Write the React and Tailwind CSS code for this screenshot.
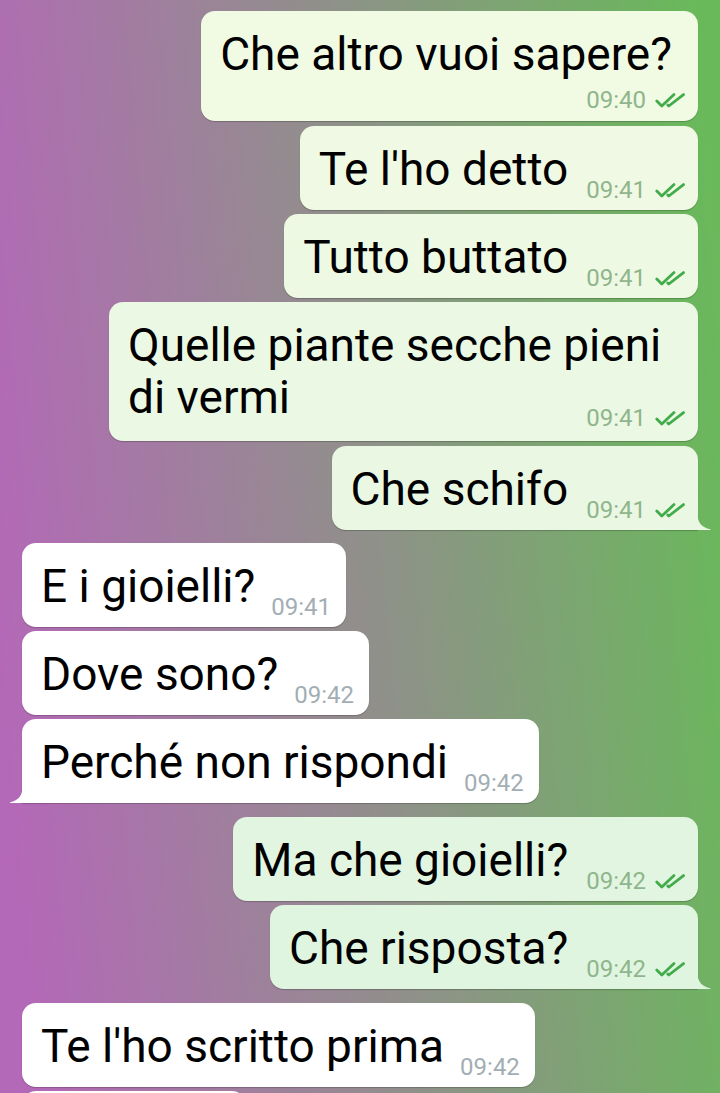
import React from "react";

const messages = [
  { out: true, text: "Che altro vuoi sapere?", time: "09:40", layout: "stack", bg: "bg-[#f1fae3]" },
  { out: true, text: "Te l'ho detto", time: "09:41", gap: "mt-[5px]", bg: "bg-[#f0f9e3]" },
  { out: true, text: "Tutto buttato", time: "09:41", bg: "bg-[#eef9e3]" },
  { out: true, text: "Quelle piante secche pieni di vermi", time: "09:41", layout: "wrap", bg: "bg-[#ebf8e3]" },
  { out: true, text: "Che schifo", time: "09:41", gap: "mt-[5px]", tail: true, bg: "bg-[#e9f7e3]" },
  { out: false, text: "E i gioielli?", time: "09:41", gap: "mt-[13px]" },
  { out: false, text: "Dove sono?", time: "09:42" },
  { out: false, text: "Perché non rispondi", time: "09:42", tail: true },
  { out: true, text: "Ma che gioielli?", time: "09:42", gap: "mt-[14px]", bg: "bg-[#e2f5e1]" },
  { out: true, text: "Che risposta?", time: "09:42", tail: true, bg: "bg-[#e0f5e0]" },
  { out: false, text: "Te l'ho scritto prima", time: "09:42", gap: "mt-[14px]" },
];

const Ticks = () => (
  <svg width="31" height="15" viewBox="0 0 31 15" fill="none" className="ml-[9px] mb-[3px] shrink-0">
    <path d="M1.8 8 L6.8 13 L19 1.6" stroke="#42ab4a" strokeWidth="2.8" strokeLinecap="round" strokeLinejoin="round" />
    <path d="M12.8 12 L13.8 13 L28.5 1.6" stroke="#42ab4a" strokeWidth="2.8" strokeLinecap="round" strokeLinejoin="round" />
  </svg>
);

const Meta = ({ out, time, className = "" }) => (
  <div className={`flex items-end shrink-0 whitespace-nowrap ${className}`}>
    <span className={`text-[24px] leading-[22px] ${out ? "text-[#8fb58c]" : "text-[#a2aeb4]"}`}>
      {time}
    </span>
    {out && <Ticks />}
  </div>
);

const Bubble = ({ m }) => {
  const side = m.out
    ? `self-end mr-[22px] pl-[19px] pr-[12px] ${m.bg} ${m.tail ? "rounded-[14px] rounded-br-none" : "rounded-[14px]"}`
    : `self-start ml-[22px] pl-[19px] pr-[15px] bg-white ${m.tail ? "rounded-[14px] rounded-bl-none" : "rounded-[14px]"}`;
  const gap = m.gap || "mt-[4px]";

  let body;
  if (m.layout === "stack") {
    body = (
      <div className="flex flex-col pt-[17px] pb-[10px]">
        <span className="leading-[52px] whitespace-nowrap mr-[14px]">{m.text}</span>
        <Meta out={m.out} time={m.time} className="self-end mt-[9px]" />
      </div>
    );
  } else if (m.layout === "wrap") {
    body = (
      <div className="flex flex-col pt-[17px] pb-[12px]">
        <span className="leading-[52px] max-w-[556px] mr-[2px]">{m.text}</span>
        <Meta out={m.out} time={m.time} className="self-end mt-[-16px]" />
      </div>
    );
  } else {
    body = (
      <div className="flex items-end pt-[17px] pb-[15px]">
        <span className="leading-[52px] whitespace-nowrap">{m.text}</span>
        <Meta out={m.out} time={m.time} className={`mb-[-6px] ${m.out ? "ml-[18px]" : "ml-[16px]"}`} />
      </div>
    );
  }

  return (
    <div className={`relative ${gap} ${side} shadow-[0_1px_1px_rgba(0,0,0,0.22)]`}>
      {body}
      {m.tail && m.out && (
        <svg width="14" height="18" viewBox="0 0 14 18" className="absolute bottom-0 right-[-13px]">
          <path d="M0 0 C0.5 9 3 15 13 17.2 Q14 17.5 13.5 18 L0 18 Z" fill={m.bg === "bg-[#e0f5e0]" ? "#e0f5e0" : "#e9f7e3"} />
        </svg>
      )}
      {m.tail && !m.out && (
        <svg width="13" height="18" viewBox="0 0 13 18" className="absolute bottom-0 left-[-12px]">
          <path d="M13 0 C12.5 9 10 15 0.5 17.2 Q-0.5 17.5 0 18 L13 18 Z" fill="#ffffff" />
        </svg>
      )}
    </div>
  );
};

export default function App() {
  return (
    <div
      className="h-[1093px] w-[720px] overflow-hidden bg-[linear-gradient(85deg,#b468b8_4%,#8f9189_52%,#69b95a_97%)] text-[46px] text-black"
      style={{ fontFamily: "Roboto, 'Noto Sans', sans-serif" }}
    >
      <div className="flex flex-col pt-[7px]">
        {messages.map((m, i) => (
          <Bubble key={i} m={m} />
        ))}
        {/* next message, only its top edge is on screen */}
        <div className="self-start ml-[22px] mt-[4px] w-[224px] h-[84px] shrink-0 rounded-[14px] bg-white shadow-[0_1px_1px_rgba(0,0,0,0.22)]" />
      </div>
    </div>
  );
}
